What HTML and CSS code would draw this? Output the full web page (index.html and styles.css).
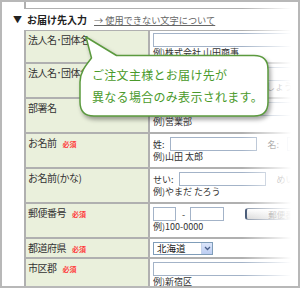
FILE: index.html
```html
<!DOCTYPE html>
<html lang="ja">
<head>
<meta charset="utf-8">
<title>お届け先入力</title>
<link rel="stylesheet" href="styles.css">
</head>
<body>
<div class="frame">
  <div class="prev"></div>
  <div class="heading">
    <span class="tri">▼</span><span class="title">お届け先入力</span><a class="link" href="#">→ 使用できない文字について</a>
  </div>
  <div class="form">
    <div class="lab">法人名･団体名</div>
    <div class="val r1"><input class="inp wide" type="text"><div class="ex">例)株式会社 山田商事</div></div>

    <div class="lab">法人名･団体名(かな)</div>
    <div class="val"><input class="inp wide" type="text"><div class="ex">例)かぶしきがいしゃ やまだしょうじ</div></div>

    <div class="lab">部署名</div>
    <div class="val"><input class="inp wide" type="text"><div class="ex">例)営業部</div></div>

    <div class="lab">お名前<span class="req">必須</span></div>
    <div class="val">
      <div class="line"><span>姓:</span><input class="inp name" type="text"><span class="sub">名:</span><input class="inp name sm" type="text"></div>
      <div class="ex">例)山田 太郎</div>
    </div>

    <div class="lab">お名前(かな)</div>
    <div class="val">
      <div class="line"><span>せい:</span><input class="inp name" type="text"><span class="sub">めい:</span><input class="inp name sm" type="text"></div>
      <div class="ex">例)やまだ たろう</div>
    </div>

    <div class="lab">郵便番号<span class="req">必須</span></div>
    <div class="val">
      <div class="line"><input class="inp zip1" type="text"><span class="dash">-</span><input class="inp zip2" type="text"><span class="btn">郵便番号検索</span></div>
      <div class="ex">例)100-0000</div>
    </div>

    <div class="lab short">都道府県<span class="req">必須</span></div>
    <div class="val short">
      <div class="select"><span class="sel-text">北海道</span><span class="sel-arrow"><svg width="7" height="5" viewBox="0 0 7 5"><path d="M1 1 L3.5 3.5 L6 1" fill="none" stroke="#4a5f8a" stroke-width="1.3"/></svg></span></div>
    </div>

    <div class="lab">市区郡<span class="req">必須</span></div>
    <div class="val"><input class="inp wide" type="text"><div class="ex">例)新宿区</div></div>
  </div>
  <div class="fade"></div>
  <div class="callout">
    <svg class="callout-shape" width="200" height="90" viewBox="76 33 200 90">
      <path d="M86,37 L116.5,55.5 H254 Q268,55.5 268,69.5 V102 Q268,116 254,116 H94 Q80,116 80,102 V82 C80,72 86,65 91.5,58 L86,37 Z" fill="#fff" stroke="#5b9a3e" stroke-width="1.5" stroke-linejoin="round"/>
    </svg>
    <p class="callout-text">ご注文主様とお届け先が<br>異なる場合のみ表示されます。</p>
  </div>
</div>
</body>
</html>
```

FILE: styles.css
```css
* {
  box-sizing: border-box;
  margin: 0;
  padding: 0;
}

body {
  margin: 0;
  background: #fff;
  font-family: "Noto Sans CJK JP", "Noto Sans", sans-serif;
}

.frame {
  position: relative;
  width: 300px;
  height: 288px;
  border: 2px solid #b8b8b8;
  overflow: hidden;
  background: #fff;
}

.prev {
  margin-left: 22px;
  height: 7px;
  border-left: 2px solid #b0b0b0;
  border-bottom: 1px solid #b0b0b0;
}

.heading {
  display: flex;
  align-items: center;
  height: 21px;
  padding-left: 11px;
  white-space: nowrap;
}

.tri {
  width: 14px;
  font-size: 9px;
  color: #222;
}

.title {
  font-size: 10px;
  font-weight: bold;
  color: #222;
}

.link {
  margin-left: 7px;
  font-size: 9.2px;
  color: #666;
  text-decoration: underline;
}

.form {
  margin-left: 22px;
  display: grid;
  grid-template-columns: 124px 1fr;
  border-top: 1px solid #b0b0b0;
  border-left: 2px solid #b0b0b0;
}

.lab {
  background: #eaf0dc;
  border-right: 2px solid #b0b0b0;
  border-bottom: 2px solid #b0b0b0;
  padding: 3px 0 0 2px;
  font-size: 10px;
  line-height: 12px;
  letter-spacing: -0.5px;
  color: #333;
  white-space: nowrap;
  overflow: hidden;
}

.req {
  margin-left: 6px;
  font-size: 7px;
  font-weight: bold;
  letter-spacing: 0;
  color: #ff3b3b;
}

.val {
  border-bottom: 2px solid #b0b0b0;
  padding: 3px 0 4px 3px;
  font-size: 9px;
  color: #333;
  white-space: nowrap;
  overflow: hidden;
}

.val.r1 {
  padding-top: 2px;
  padding-bottom: 3px;
}

.val.short {
  padding-bottom: 2px;
}

.inp {
  display: block;
  height: 14px;
  border: 1px solid #a3b3c8;
  background: #fff;
  font: inherit;
  outline: none;
  appearance: none;
}

.inp.wide {
  width: 170px;
}

.ex {
  line-height: 12px;
}

.line {
  display: flex;
  align-items: center;
  height: 14px;
}

.line .inp {
  flex: none;
}

.inp.name {
  width: 87px;
  margin-left: 5px;
}

.inp.name.sm {
  width: 40px;
  margin-left: 8px;
}

.sub {
  margin-left: 11px;
}

.inp.zip1 {
  width: 23px;
}

.dash {
  margin: 0 5px 0 6px;
}

.inp.zip2 {
  width: 34px;
}

.btn {
  display: block;
  flex: none;
  margin-left: 21px;
  width: 80px;
  height: 12px;
  border: 1px solid #8a96a8;
  border-left: 2px solid #3b4f6e;
  border-radius: 3px;
  background: linear-gradient(#ffffff, #d6d6d6);
  padding-left: 21px;
  font-size: 8.5px;
  line-height: 10px;
  color: #555;
}

.select {
  display: flex;
  align-items: stretch;
  width: 60px;
  height: 13px;
  border: 1px solid #7f9db9;
  background: #fff;
}

.sel-text {
  flex: 1;
  padding-left: 3px;
  font-size: 9.5px;
  line-height: 11px;
  color: #222;
}

.sel-arrow {
  display: flex;
  align-items: center;
  justify-content: center;
  width: 11px;
  background: linear-gradient(#dce6fb, #bccdf2);
  border-left: 1px solid #c5d2ea;
}

.fade {
  position: absolute;
  top: 0;
  bottom: 0;
  right: 0;
  width: 56px;
  background: linear-gradient(to right, rgba(255, 255, 255, 0), #fff 88%);
}

.callout {
  position: absolute;
  left: 74px;
  top: 31px;
  width: 200px;
  height: 90px;
}

.callout-shape {
  position: absolute;
  left: 0;
  top: 0;
  filter: drop-shadow(2px 3px 2px rgba(0, 0, 0, 0.35));
}

.callout-text {
  position: absolute;
  left: 16px;
  top: 31px;
  font-size: 12px;
  line-height: 22px;
  letter-spacing: 0.3px;
  color: #4a9a2b;
  white-space: nowrap;
}
```
